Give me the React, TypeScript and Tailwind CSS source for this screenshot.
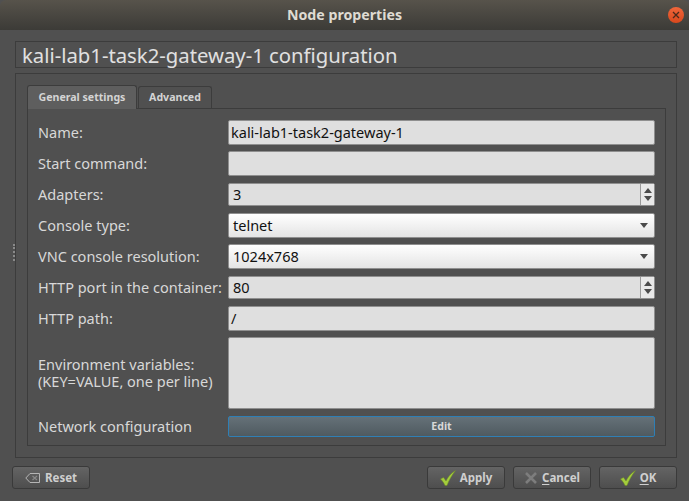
import React from "react";

const inputCls = "flex-1 h-full rounded-[2px] border border-[#8f8f8f] bg-[#dfdfdf] flex items-center px-[2px] text-[14.5px] text-[#111111]";

function Row({ label, h, mt, children }: { label: React.ReactNode; h: string; mt: string; children: React.ReactNode }) {
  return (
    <div className={`flex items-center ${h} ${mt}`}>
      <div className="w-[190px] shrink-0 text-[14.5px] leading-[17px] text-[#d8d8d8] whitespace-nowrap">{label}</div>
      {children}
    </div>
  );
}

function Tri({ up }: { up?: boolean }) {
  return (
    <svg width="8" height="5" viewBox="0 0 8 5">
      <path d={up ? "M4 0 L8 5 H0 Z" : "M0 0 H8 L4 5 Z"} fill="#4a4a4a" />
    </svg>
  );
}

function Spin({ value }: { value: string }) {
  return (
    <div className="flex-1 h-full rounded-[2px] border border-[#8f8f8f] bg-[#dfdfdf] flex items-center text-[14.5px] text-[#111111]">
      <div className="flex-1 px-[4px]">{value}</div>
      <div className="w-[14px] h-full border-l border-[#9a9a9a] bg-[#e8e8e8] flex flex-col items-center justify-center gap-[3px]">
        <Tri up />
        <Tri />
      </div>
    </div>
  );
}

function Combo({ value }: { value: string }) {
  return (
    <div className="flex-1 h-full rounded-[2px] border border-[#8f8f8f] bg-gradient-to-b from-[#ffffff] to-[#e4e4e4] flex items-center justify-between pl-[4px] pr-[6px] text-[14.5px] text-[#111111]">
      <span>{value}</span>
      <Tri />
    </div>
  );
}

function Check() {
  return (
    <svg width="16" height="16" viewBox="0 0 16 16">
      <path d="M0.5 9 L3.5 7.5 L6 11 C8 7 11 3 15.5 0.5 C12 5 9 10 7 15.5 L5 15.5 C4 13 2.5 11 0.5 9 Z" fill="#a3cc3c" stroke="#6f8f25" strokeWidth="0.5" />
    </svg>
  );
}

function Btn({ icon, children, w = "w-[78px]" }: { icon: React.ReactNode; children: React.ReactNode; w?: string }) {
  return (
    <div className={`${w} h-[23px] rounded-[3px] border border-[#3a3a3a] bg-gradient-to-b from-[#646464] to-[#4e4e4e] flex items-center justify-center gap-[4px] text-[11.5px] font-bold text-[#cfcfcf]`}>
      {icon}
      <span>{children}</span>
    </div>
  );
}

export default function App() {
  return (
    <div className="w-[689px] h-[501px] overflow-hidden bg-[#505050] flex flex-col" style={{ fontFamily: '"Noto Sans", sans-serif' }}>
      <div className="h-[30px] shrink-0 rounded-t-[6px] bg-gradient-to-b from-[#57534b] to-[#3c3b37] flex items-center justify-center relative text-[14.2px] font-bold text-[#dfdbd2]">
        Node properties
        <div className="absolute right-[5px] top-[7px] w-[16px] h-[16px] rounded-full bg-gradient-to-b from-[#f0663a] to-[#d9481c] flex items-center justify-center">
          <svg width="8" height="8" viewBox="0 0 8 8"><path d="M1 1 L7 7 M7 1 L1 7" stroke="#4a2a1c" strokeWidth="1.3" /></svg>
        </div>
      </div>

      <div className="flex-1 flex flex-col px-[12px] pt-[11px] pb-[12px] relative">
        <div className="absolute left-[13px] top-[214px] w-[2px] h-[17px] border-l-2 border-dotted border-[#8a8a8a]" />
        <div className="ml-[3px] h-[27px] w-[662px] border border-[#3c3c3c] flex items-center pl-[6px] pt-[1px] text-[20.3px] text-[#e0e0e0] shrink-0">
          kali-lab1-task2-gateway-1 configuration
        </div>

        <div className="ml-[3px] mt-[5px] w-[662px] h-[385px] border border-[#3c3c3c] shrink-0 pl-[11px] pr-[10px] pt-[11px]">
          <div className="flex items-end h-[24px] relative z-10">
            <div className="h-[24px] w-[110px] rounded-t-[3px] border border-b-0 border-[#3c3c3c] bg-[#5e5e5e] flex items-center justify-center text-[10.6px] font-bold text-[#d4d4d4]">General settings</div>
            <div className="h-[22px] w-[74px] ml-[1px] mb-[1px] rounded-t-[3px] border border-b-0 border-[#3c3c3c] bg-[#505050] flex items-center justify-center text-[10.6px] font-bold text-[#d4d4d4]">Advanced</div>
          </div>
          <div className="h-[338px] -mt-[1px] border border-[#3c3c3c] pl-[10px] pr-[10px] pt-[11px]">
            <Row label="Name:" h="h-[25px]" mt=""><div className={inputCls}>kali-lab1-task2-gateway-1</div></Row>
            <Row label="Start command:" h="h-[25px]" mt="mt-[6px]"><div className={inputCls} /></Row>
            <Row label="Adapters:" h="h-[23px]" mt="mt-[7px]"><Spin value="3" /></Row>
            <Row label="Console type:" h="h-[25px]" mt="mt-[7px]"><Combo value="telnet" /></Row>
            <Row label="VNC console resolution:" h="h-[25px]" mt="mt-[6px]"><Combo value="1024x768" /></Row>
            <Row label="HTTP port in the container:" h="h-[23px]" mt="mt-[7px]"><Spin value="80" /></Row>
            <Row label="HTTP path:" h="h-[25px]" mt="mt-[7px]"><div className={inputCls}>/</div></Row>
            <Row label={<>Environment variables:<br />(KEY=VALUE, one per line)</>} h="h-[72px]" mt="mt-[6px]"><div className={inputCls} /></Row>
            <Row label="Network configuration" h="h-[21px]" mt="mt-[7px]">
              <div className="flex-1 h-full rounded-[2px] border border-[#2f7fb5] bg-gradient-to-b from-[#657178] to-[#4f5a60] flex items-center justify-center text-[10.6px] font-bold text-[#d8d8d8]">Edit</div>
            </Row>
          </div>
        </div>

        <div className="flex mt-[8px] items-center">
          <Btn icon={
            <svg width="16" height="12" viewBox="0 0 16 12"><path d="M5 1.5 H14.5 V10.5 H5 L0.8 6 Z" fill="none" stroke="#b5b5b5" /><path d="M7.5 4 L12 8 M12 4 L7.5 8" stroke="#8a8a8a" strokeWidth="1.2" /></svg>
          }>Reset</Btn>
          <div className="flex-1" />
          <div className="flex gap-[8px]">
            <Btn icon={<Check />}>Apply</Btn>
            <Btn icon={
              <svg width="14" height="14" viewBox="0 0 14 14"><path d="M2 2 L12 12 M12 2 L2 12" stroke="#7d7d7d" strokeWidth="2.6" /></svg>
            }><span className="underline underline-offset-2 decoration-1">C</span>ancel</Btn>
            <Btn icon={<Check />}><span className="underline underline-offset-2 decoration-1">O</span>K</Btn>
          </div>
        </div>
      </div>
    </div>
  );
}
